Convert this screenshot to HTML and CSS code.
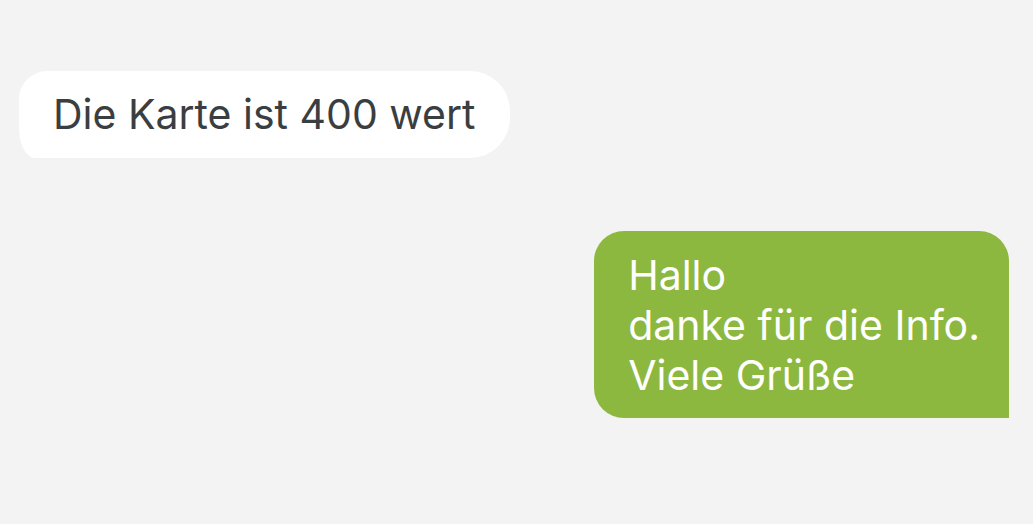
FILE: index.html
```html
<!DOCTYPE html>
<html lang="de">
<head>
    <meta charset="UTF-8">
    <meta name="viewport" content="width=device-width, initial-scale=1.0">
    <title>Chat</title>
    <link rel="stylesheet" href="styles.css">
</head>
<body>

    <!-- Conversation -->
    <div class="chat">
        <div class="row incoming">
            <div class="bubble bubble-in">Die Karte ist 400 wert</div>
        </div>
        <div class="row outgoing">
            <div class="bubble bubble-out">
                Hallo<br>
                danke für die Info.<br>
                Viele Grüße
            </div>
        </div>
    </div>

</body>
</html>
```

FILE: styles.css
```css
body {
    margin: 0;
    font-family: Inter, "Liberation Sans", sans-serif;
    background-color: #f3f3f3;
}

/* Conversation column */
.chat {
    display: flex;
    flex-direction: column;
    gap: 73px;
    padding: 71px 24px 0 19px;
}

.row {
    display: flex;
}

.incoming {
    justify-content: flex-start;
}

.outgoing {
    justify-content: flex-end;
}

/* Bubbles */
.bubble {
    font-size: 41px;
    line-height: 50px;
    padding: 18px 34px 19px 34px;
}

.bubble-in {
    background-color: #ffffff;
    color: #3b3e40;
    border-radius: 28px 40px 40px 16px / 28px 40px 40px 30px; /* tail on the left */
}

.bubble-out {
    background-color: #8db83f;
    color: #ffffff;
    border-radius: 30px 30px 0 30px;
    padding: 19px 29px 18px 34px;
}
```
